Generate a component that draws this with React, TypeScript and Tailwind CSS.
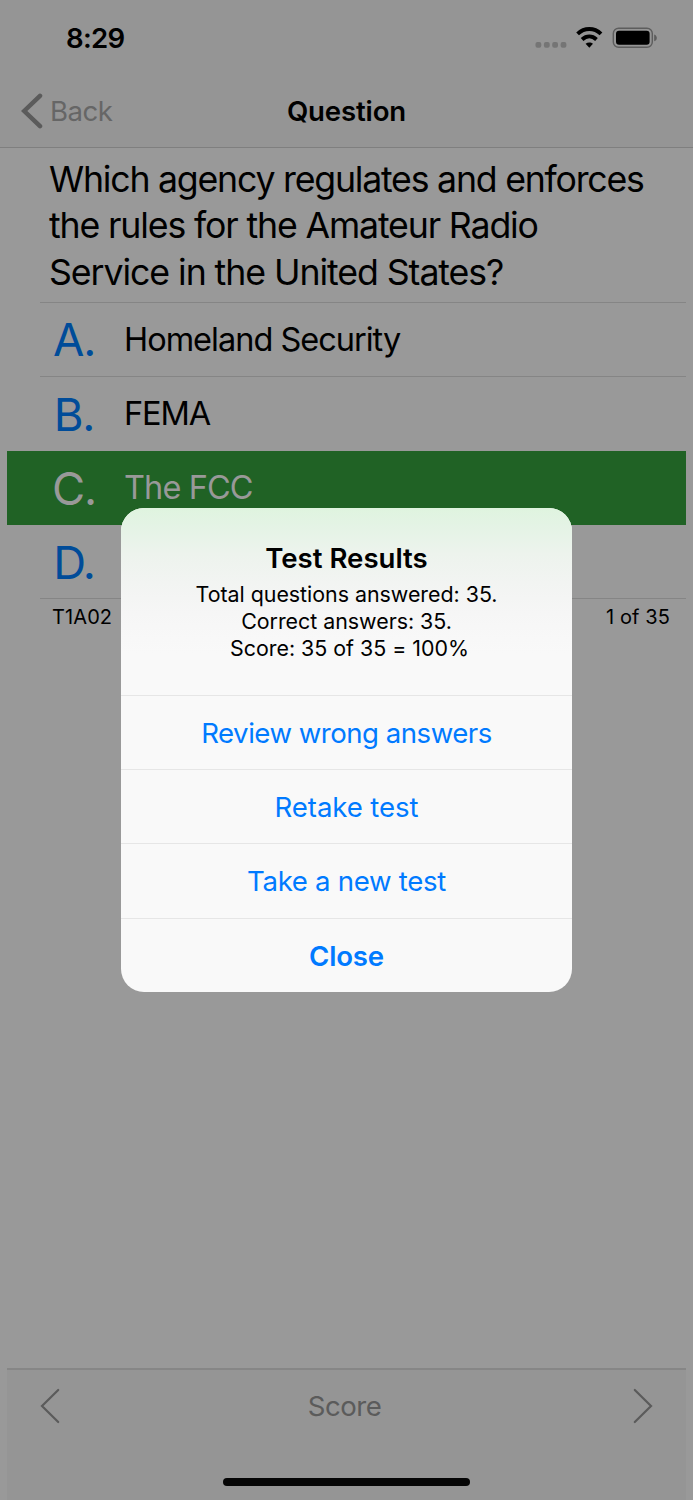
import clsx from "clsx";

interface Answer {
  letter: string;
  text: string;
  spacing: string;
  correct?: boolean;
}

const questionLines = [
  { text: "Which agency regulates and enforces", spacing: "tracking-[-1.23px]" },
  { text: "the rules for the Amateur Radio", spacing: "tracking-[-1.15px]" },
  { text: "Service in the United States?", spacing: "tracking-[-1.07px]" },
];

const answers: Answer[] = [
  { letter: "A.", text: "Homeland Security", spacing: "tracking-[-1px]" },
  { letter: "B.", text: "FEMA", spacing: "tracking-[-1.1px]" },
  { letter: "C.", text: "The FCC", spacing: "tracking-[-0.9px]", correct: true },
  { letter: "D.", text: "", spacing: "tracking-normal" },
];

const actions = [
  { label: "Review wrong answers", style: "tracking-[-0.5px]" },
  { label: "Retake test", style: "tracking-[-0.1px]" },
  { label: "Take a new test", style: "tracking-[-0.3px]" },
  { label: "Close", style: "font-semibold tracking-[-0.2px]" },
];

function StatusIcons() {
  return (
    <svg width="124" height="24" viewBox="0 0 124 24" fill="none">
      {[3.3, 11.7, 20, 28.4].map((x) => (
        <rect key={x} x={x - 2.8} y="16" width="5.8" height="5.8" rx="2" fill="#757575" />
      ))}
      {/* wifi */}
      <path d="M42.6 7.9C49.4 1.5 59.2 1.5 66 7.9" stroke="#000" strokeWidth="4" />
      <path d="M47.1 13.4C51.5 9.5 57.1 9.5 61.5 13.4" stroke="#000" strokeWidth="4" />
      <path d="M50.6 17.8C52.8 15.9 55.8 15.9 58 17.8L54.3 21.8Z" fill="#000" />
      {/* battery */}
      <rect x="78.3" y="2.2" width="39" height="19" rx="5.3" stroke="#5d5d5d" strokeWidth="1.4" />
      <rect x="81" y="4.8" width="33.6" height="14" rx="3" fill="#000" />
      <path d="M119.2 8.4C122.7 9.7 122.7 14 119.2 15.3Z" fill="#5d5d5d" />
    </svg>
  );
}

function Header() {
  return (
    <header className="h-[148px] bg-[#959595] border-b border-[#7f7f7f]">
      <div className="flex h-[75px] items-center justify-between pt-[1px] pl-[66px] pr-[34px]">
        <span className="pt-[1px] text-[27.6px] font-semibold tracking-[-0.7px]">8:29</span>
        <StatusIcons />
      </div>
      <div className="grid h-[72px] grid-cols-3 items-center">
        <button className="flex items-center gap-[7px] pl-[21px] text-[27.6px] text-[#666]">
          <svg width="22" height="36" viewBox="0 0 22 36" fill="none">
            <path
              d="M19 2.8L3.2 18L19 33.2"
              stroke="#5b5b5b"
              strokeWidth="4.5"
              strokeLinecap="round"
            />
          </svg>
          <span className="pt-[1px] tracking-[-0.5px]">Back</span>
        </button>
        <h1 className="pt-[1px] text-center text-[27.6px] font-semibold tracking-[-0.15px]">
          Question
        </h1>
      </div>
    </header>
  );
}

function AnswerRow({ letter, text, spacing, correct }: Answer) {
  return (
    <li
      className={clsx(
        "flex h-[74.1px] pl-[33px]",
        correct ? "bg-[#206225] text-[#999]" : "text-black",
      )}
    >
      <div
        className={clsx(
          "flex flex-1 items-center border-b pt-[2px]",
          letter === "A." || letter === "D." ? "border-[#858585]" : "border-transparent",
        )}
      >
        <span
          className={clsx(
            "w-[68px] text-center text-[45.5px] tracking-[-1.2px]",
            correct ? "text-[#999]" : "text-[#004c99]",
          )}
        >
          {letter}
        </span>
        <span className={clsx("pl-[16px] text-[32.5px]", spacing)}>{text}</span>
      </div>
    </li>
  );
}

function ResultsDialog() {
  return (
    <div className="absolute top-[508px] left-[121px] w-[451px] h-[484px] overflow-hidden rounded-[23px] bg-[#f9f9f9]">
      <div className="h-[188px] border-b border-[#e6e6e6] bg-[linear-gradient(180deg,#dff4df_0px,#e4f3e5_18px,#edf3ed_46px,#f2f4f2_75px,#f6f6f6_105px,#f9f9f9_145px)] pt-[33px] text-center">
        <h2 className="text-[27.6px] leading-[35px] font-semibold tracking-[0px]">Test Results</h2>
        <p className="pt-[5px] text-[21.4px] leading-[26.9px] tracking-[-0.02px]">
          Total questions answered: 35.
          <br />
          Correct answers: 35.
          <br />
          <span className="pl-[6px]">Score: 35 of 35 = 100%</span>
        </p>
      </div>
      <div className="flex flex-col divide-y divide-[#e6e6e6]">
        {actions.map((action) => (
          <button
            key={action.label}
            className={clsx("h-[74.2px] pt-[2px] text-[27.6px] text-[#007aff]", action.style)}
          >
            {action.label}
          </button>
        ))}
      </div>
    </div>
  );
}

function Toolbar() {
  return (
    <footer className="mx-[7px] h-[132px] border-t-2 border-[#868686] bg-[#959595]">
      <div className="flex h-[71px] items-center justify-between px-[33px] text-[#5b5b5b]">
        <svg width="21" height="36" viewBox="0 0 21 36" fill="none">
          <path d="M18.2 2L2 18L18.2 34" stroke="currentColor" strokeWidth="2.2" strokeLinecap="round" />
        </svg>
        <span className="pt-[2px] pr-[4px] text-[27.6px] tracking-[-0.5px]">Score</span>
        <svg width="21" height="36" viewBox="0 0 21 36" fill="none">
          <path d="M2.8 2L19 18L2.8 34" stroke="currentColor" strokeWidth="2.2" strokeLinecap="round" />
        </svg>
      </div>
      <div className="mx-auto mt-[37px] h-[8px] w-[247px] rounded-full bg-[#060606]" />
    </footer>
  );
}

export default function App() {
  return (
    <div className="relative flex h-[1500px] w-[693px] flex-col overflow-hidden bg-[#999] font-['Inter',sans-serif] text-black">
      <Header />
      <main className="flex-1 px-[7px]">
        <div className="ml-[33px] h-[155px] border-b border-[#858585] pt-[7.5px] pl-[9px]">
          <p className="text-[35.7px] leading-[46.8px] whitespace-nowrap">
            {questionLines.map((line) => (
              <span key={line.text} className={clsx("block", line.spacing)}>
                {line.text}
              </span>
            ))}
          </p>
        </div>
        <ul>
          {answers.map((answer) => (
            <AnswerRow key={answer.letter} {...answer} />
          ))}
        </ul>
        <div className="flex justify-between pt-[4px] pr-[16px] pl-[45px] text-[20px] leading-[28px] tracking-[0.1px]">
          <span>T1A02</span>
          <span>1 of 35</span>
        </div>
      </main>
      <Toolbar />
      <ResultsDialog />
    </div>
  );
}
